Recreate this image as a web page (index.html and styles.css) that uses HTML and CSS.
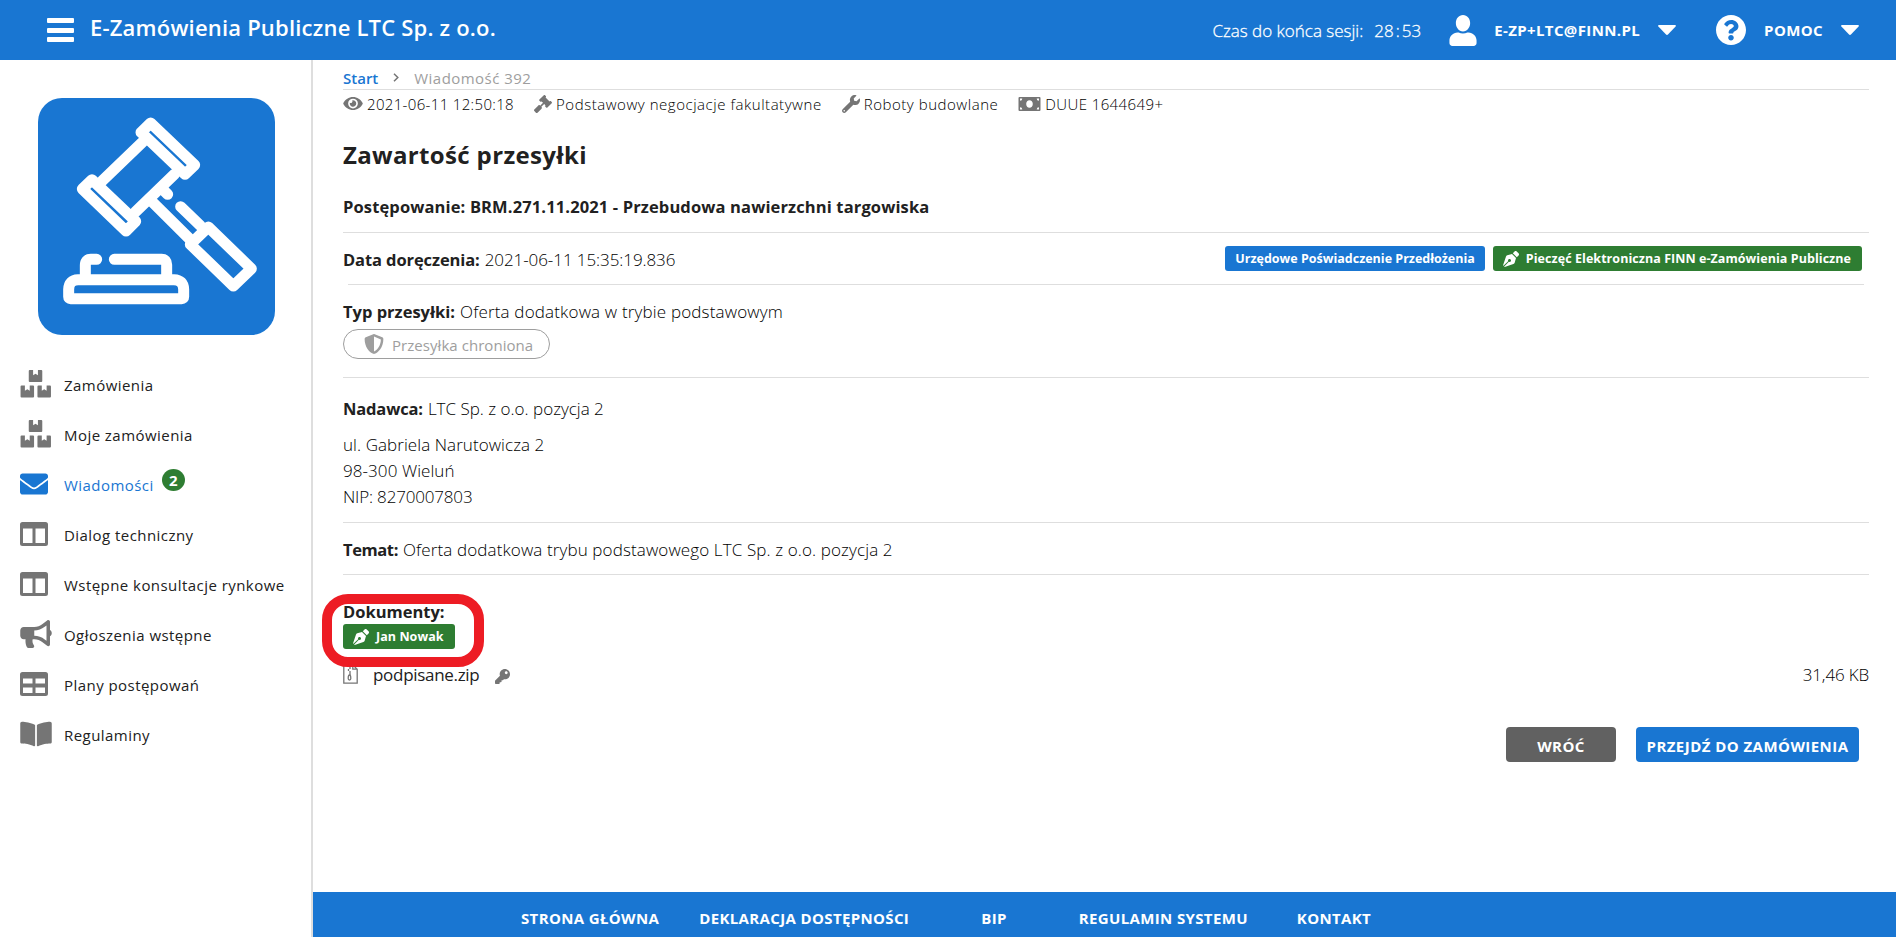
FILE: index.html
```
<!DOCTYPE html>
<html lang="pl">
<head>
    <meta charset="UTF-8">
    <meta name="viewport" content="width=device-width, initial-scale=1.0">
    <title>E-Zamówienia Publiczne LTC Sp. z o.o.</title>
    <link rel="stylesheet" href="styles.css">
</head>
<body>
    <header class="topbar">
        <button class="hamburger" aria-label="Menu"><span></span><span></span><span></span></button>
        <h1 class="app-title">E-Zamówienia Publiczne LTC Sp. z o.o.</h1>
        <div class="session"><span class="session-label">Czas do końca sesji:</span> <span class="session-time">28<i>:</i>53</span></div>
        <a class="account" href="#">
            <svg class="icon-user" viewBox="0 0 448 512"><path d="M224 272c70.700 0 118-64 118-138S294.700 0 224 0 106 60 106 134s47.300 138 118 138zm89.600 16h-16.700c-22.200 10.200-46.900 16-72.900 16s-50.600-5.800-72.900-16h-16.700C60.200 288 0 348.200 0 422.400V464c0 26.500 21.500 48 48 48h352c26.500 0 48-21.500 48-48v-41.600c0-74.200-60.200-134.400-134.400-134.400z"/></svg>
            <span class="account-name">E-ZP+LTC@FINN.PL</span>
            <svg class="caret" viewBox="0 0 18 10"><path d="M1.200 0h15.600q1.800 0 .8 1.400L10.200 9.300q-1.200 1.200-2.400 0L.4 1.400Q-.6 0 1.200 0z"/></svg>
        </a>
        <a class="help" href="#">
            <svg class="icon-help" viewBox="8 8 496 496"><path d="M504 256c0 136.997-111.043 248-248 248S8 392.997 8 256C8 119.083 119.043 8 256 8s248 111.083 248 248zM262.655 90c-54.497 0-89.255 22.957-116.549 63.758-3.536 5.286-2.353 12.415 2.715 16.258l34.699 26.310c5.205 3.947 12.621 3.008 16.665-2.122 17.864-22.658 30.113-35.797 57.303-35.797 20.429 0 45.698 13.148 45.698 32.958 0 14.976-12.363 22.667-32.534 33.976C247.128 238.528 216 254.941 216 296v4c0 6.627 5.373 12 12 12h56c6.627 0 12-5.373 12-12v-1.333c0-28.462 83.186-29.647 83.186-106.667 0-58.002-60.165-102-116.531-102zM256 338c-25.365 0-46 20.635-46 46 0 25.364 20.635 46 46 46s46-20.636 46-46c0-25.365-20.635-46-46-46z"/></svg>
            <span class="help-name">POMOC</span>
            <svg class="caret" viewBox="0 0 18 10"><path d="M1.200 0h15.600q1.800 0 .8 1.400L10.200 9.300q-1.200 1.200-2.400 0L.4 1.400Q-.6 0 1.200 0z"/></svg>
        </a>
    </header>

    <div class="layout">
        <aside class="sidebar">
            <div class="logo">
                <svg viewBox="54 54 711 711">
                    <path d="M392 129 524 255 495 283 363 157z"/>
                    <path d="M216 299 347 424 318 453 187 327z"/>
                    <path d="M247 302 367 187M346 396 464 282"/>
                    <path d="M399 368 506 474M425 325 443 343M482 380 541 437"/>
                    <path d="M565 441 694 566 640 618 511 493z"/>
                    <path d="M196 590V556Q196 538 212 538H230M283 538H425Q440 538 440 554V590"/>
                    <path d="M146 650V628Q147 600 174 599H462Q490 600 491 628V650Q491 656 485 656H152Q146 656 146 650z"/>
                </svg>
            </div>
            <nav class="menu">
                <a href="#" class="menu-item"><svg class="wide" viewBox="0 0 32 29"><path d="M9.500 0H13v5.500l2.500-1.500 2.500 1.500V0h3.500q1 0 1 1v10.500q0 1-1 1h-12q-1 0-1-1V1q0-1 1-1zM1 16h3.500v5.500L7 20l2.500 1.500V16H13q1 0 1 1v10.500q0 1-1 1H1q-1 0-1-1V17q0-1 1-1zM18.500 16H22v5.500l2.500-1.500 2.500 1.500V16h3.500q1 0 1 1v10.500q0 1-1 1h-12q-1 0-1-1V17q0-1 1-1z"/></svg><span>Zamówienia</span></a>
                <a href="#" class="menu-item"><svg class="wide" viewBox="0 0 32 29"><path d="M9.500 0H13v5.500l2.500-1.500 2.500 1.500V0h3.500q1 0 1 1v10.500q0 1-1 1h-12q-1 0-1-1V1q0-1 1-1zM1 16h3.500v5.500L7 20l2.500 1.500V16H13q1 0 1 1v10.500q0 1-1 1H1q-1 0-1-1V17q0-1 1-1zM18.500 16H22v5.500l2.500-1.500 2.500 1.500V16h3.500q1 0 1 1v10.500q0 1-1 1h-12q-1 0-1-1V17q0-1 1-1z"/></svg><span>Moje zamówienia</span></a>
                <a href="#" class="menu-item active"><svg viewBox="0 0 512 512"><path d="M502.300 190.800c3.900-3.100 9.700-.2 9.700 4.700V400c0 26.500-21.500 48-48 48H48c-26.500 0-48-21.500-48-48V195.600c0-5 5.700-7.800 9.700-4.700 22.400 17.400 52.100 39.500 154.100 113.600 21.100 15.400 56.700 47.800 92.200 47.600 35.700.3 72-32.800 92.300-47.600 102-74.100 131.600-96.300 154-113.700zM256 320c23.200.4 56.600-29.200 73.400-41.400 132.700-96.300 142.800-104.700 173.400-128.700 5.800-4.500 9.200-11.500 9.200-18.900v-19c0-26.500-21.500-48-48-48H48c-26.500 0-48 21.500-48 48v19c0 7.400 3.400 14.300 9.200 18.900 30.600 23.900 40.700 32.400 173.400 128.700 16.800 12.200 50.200 41.800 73.400 41.400z"/></svg><span>Wiadomości</span><b class="counter">2</b></a>
                <a href="#" class="menu-item"><svg viewBox="0 0 28 28"><path fill-rule="evenodd" d="M2.500 2h23Q28 2 28 4.500v19q0 2.500-2.500 2.500h-23Q0 26 0 23.500v-19Q0 2 2.500 2zM3 8.500V23h9.500V8.500zm12.500 0V23H25V8.500z"/></svg><span>Dialog techniczny</span></a>
                <a href="#" class="menu-item"><svg viewBox="0 0 28 28"><path fill-rule="evenodd" d="M2.500 2h23Q28 2 28 4.500v19q0 2.500-2.500 2.500h-23Q0 26 0 23.500v-19Q0 2 2.500 2zM3 8.500V23h9.500V8.500zm12.500 0V23H25V8.500z"/></svg><span>Wstępne konsultacje rynkowe</span></a>
                <a href="#" class="menu-item"><svg class="wide" viewBox="0 0 576 512"><path d="M576 240c0-23.630-12.950-44.040-32-55.120V32.010C544 23.260 537.020 0 512 0c-7.120 0-14.190 2.380-19.980 7.020l-85.030 68.030C364.280 109.190 310.660 128 256 128H64c-35.350 0-64 28.650-64 64v96c0 35.350 28.650 64 64 64h33.700c-1.390 10.480-2.180 21.140-2.180 32 0 39.770 9.260 77.350 25.560 110.940 5.190 10.690 16.520 17.060 28.400 17.060h74.280c26.050 0 41.690-29.840 25.900-50.560-16.400-21.520-26.150-48.360-26.150-77.440 0-11.110 1.620-21.790 4.410-32H256c54.660 0 108.280 18.810 150.980 52.950l85.030 68.030a32.023 32.023 0 0 0 19.980 7.020c24.920 0 32-22.780 32-32V295.130C563.050 284.040 576 263.630 576 240zm-96 141.420l-33.050-26.440C392.950 311.780 325.120 288 256 288v-96c69.120 0 136.950-23.780 190.950-66.980L480 98.580v282.840z"/></svg><span>Ogłoszenia wstępne</span></a>
                <a href="#" class="menu-item"><svg viewBox="0 0 28 28"><path fill-rule="evenodd" d="M2.500 2h23Q28 2 28 4.500v19q0 2.500-2.500 2.500h-23Q0 26 0 23.500v-19Q0 2 2.500 2zM3 8.500v5h9.500v-5zm12.500 0v5H25v-5zM3 17.500V23h9.500v-5.500zm12.500 0V23H25v-5.500z"/></svg><span>Plany postępowań</span></a>
                <a href="#" class="menu-item"><svg class="wide" viewBox="0 0 576 512"><path d="M542.220 32.050c-54.800 3.110-163.720 14.430-230.960 55.590-4.640 2.840-7.270 7.890-7.270 13.170v363.870c0 11.550 12.630 18.850 23.280 13.490 69.180-34.820 169.230-44.320 218.700-46.920 16.890-.89 30.020-14.430 30.020-30.660V62.750c.01-17.710-15.350-31.740-33.770-30.700zM264.730 87.640C197.500 46.480 88.580 35.170 33.780 32.050 15.360 31.010 0 45.040 0 62.750V400.600c0 16.240 13.130 29.780 30.020 30.660 49.490 2.600 149.590 12.110 218.770 46.950 10.620 5.350 23.210-1.940 23.210-13.460V100.630c0-5.290-2.620-10.140-7.270-12.990z"/></svg><span>Regulaminy</span></a>
            </nav>
        </aside>

        <main class="content">
            <div class="page">
                <div class="breadcrumb">
                    <a href="#">Start</a>
                    <svg viewBox="0 0 6 9"><path d="M1 .8 4.800 4.500 1 8.200"/></svg>
                    <span class="crumb">Wiadomość 392</span>
                </div>
                <div class="meta">
                    <span class="meta-item"><svg class="eye" viewBox="0 64 576 384"><path d="M572.520 241.400C518.290 135.590 410.930 64 288 64S57.680 135.640 3.480 241.410a32.350 32.350 0 0 0 0 29.190C57.710 376.410 165.070 448 288 448s230.320-71.640 284.520-177.410a32.350 32.350 0 0 0 0-29.190zM288 400a144 144 0 1 1 144-144 143.930 143.930 0 0 1-144 144zm0-240a95.310 95.310 0 0 0-25.310 3.790 47.850 47.850 0 0 1-66.900 66.900A95.780 95.780 0 1 0 288 160z"/></svg><span class="viewed">2021-06-11 12:50:18</span></span>
                    <span class="meta-item"><svg class="gavel" viewBox="0 0 512 512"><path d="M504.971 199.362l-22.627-22.627c-9.373-9.373-24.569-9.373-33.941 0l-5.657 5.657L329.608 69.255l5.657-5.657c9.373-9.373 9.373-24.569 0-33.941L312.638 7.029c-9.373-9.373-24.569-9.373-33.941 0L154.246 131.480c-9.373 9.373-9.373 24.569 0 33.941l22.627 22.627c9.373 9.373 24.569 9.373 33.941 0l5.657-5.657 39.598 39.598-81.040 81.040-5.657-5.657c-12.497-12.497-32.758-12.497-45.255 0L9.373 412.118c-12.497 12.497-12.497 32.758 0 45.255l45.255 45.255c12.497 12.497 32.758 12.497 45.255 0l114.745-114.745c12.497-12.497 12.497-32.758 0-45.255l-5.657-5.657 81.040-81.040 39.598 39.598-5.657 5.657c-9.373 9.373-9.373 24.569 0 33.941l22.627 22.627c9.373 9.373 24.569 9.373 33.941 0l124.451-124.451c9.372-9.372 9.372-24.568 0-33.941z"/></svg><span>Podstawowy negocjacje fakultatywne</span></span>
                    <span class="meta-item"><svg class="wrench" viewBox="0 0 512 512"><path d="M507.730 109.100c-2.240-9.030-13.540-12.090-20.120-5.510l-74.360 74.360-67.880-11.310-11.310-67.880 74.360-74.360c6.620-6.620 3.430-17.900-5.660-20.160-47.380-11.740-99.550.91-136.580 37.930-39.640 39.640-50.550 97.100-34.050 147.200L18.740 402.760c-24.990 24.990-24.990 65.510 0 90.500 24.990 24.990 65.510 24.990 90.500 0l213.210-213.210c50.120 16.710 107.470 5.680 147.370-34.220 37.070-37.070 49.700-89.320 37.910-136.730zM64 472c-13.250 0-24-10.750-24-24 0-13.260 10.750-24 24-24s24 10.740 24 24c0 13.250-10.750 24-24 24z"/></svg><span>Roboty budowlane</span></span>
                    <span class="meta-item"><svg class="money" viewBox="0 0 22 14"><path fill-rule="evenodd" d="M1 0h20q1 0 1 1v12q0 1-1 1H1q-1 0-1-1V1q0-1 1-1zM1.500 1.500v2.300Q3.800 3.800 3.800 1.500zm16.700 0q0 2.300 2.300 2.300V1.500zM1.500 10.200v2.300h2.300q0-2.300-2.300-2.300zm19 0q-2.300 0-2.300 2.300h2.300zM11 3.300c-1.900 0-3.300 1.600-3.300 3.700s1.400 3.700 3.300 3.700 3.300-1.600 3.300-3.700S12.900 3.300 11 3.300z"/></svg><span class="journal">DUUE 1644649+</span></span>
                </div>

                <h2>Zawartość przesyłki</h2>
                <div class="row row-case"><strong>Postępowanie: BRM.271.11.2021 - Przebudowa nawierzchni targowiska</strong></div>
                <div class="row row-date">
                    <strong>Data doręczenia:</strong><span class="date">2021-06-11 15:35:19.836</span>
                    <div class="tags">
                        <span class="tag tag-blue">Urzędowe Poświadczenie Przedłożenia</span>
                        <span class="tag tag-green"><svg viewBox="0 0 512 512"><path d="M136.600 138.790a64.003 64.003 0 0 0-43.310 41.350L0 460l14.690 14.690L164.800 324.580c-2.990-6.260-4.800-13.180-4.800-20.580 0-26.510 21.490-48 48-48s48 21.490 48 48-21.490 48-48 48c-7.400 0-14.320-1.810-20.580-4.800L37.310 497.310 52 512l279.860-93.290a64.003 64.003 0 0 0 41.350-43.310L416 224 288 96l-151.400 42.790zm361.340-64.620l-60.110-60.110c-18.750-18.750-49.160-18.750-67.910 0l-56.550 56.550 128.020 128.020 56.550-56.550c18.750-18.750 18.750-49.150 0-67.910z"/></svg>Pieczęć Elektroniczna FINN e-Zamówienia Publiczne</span>
                    </div>
                </div>
                <div class="row row-type">
                    <div class="line"><strong>Typ przesyłki:</strong><span>Oferta dodatkowa w trybie podstawowym</span></div>
                    <span class="protected"><svg viewBox="0 0 512 512"><path d="M466.500 83.700l-192-80a48.150 48.150 0 0 0-36.900 0l-192 80C27.700 91.100 16 108.600 16 128c0 198.500 114.500 335.700 221.500 380.300 11.800 4.900 25.100 4.900 36.900 0C360.100 472.600 496 349.300 496 128c0-19.400-11.700-36.900-29.500-44.300zM256.100 446.300l-.1-381 175.900 73.300c-3.300 151.400-82.100 261.100-175.800 307.700z"/></svg>Przesyłka chroniona</span>
                </div>
                <div class="row row-sender">
                    <div class="line"><strong>Nadawca:</strong><span>LTC Sp. z o.o. pozycja 2</span></div>
                    <address>
                        <span>ul. Gabriela Narutowicza 2</span><br>
                        <span>98-300 Wieluń</span><br>
                        <span class="nip">NIP: 8270007803</span>
                    </address>
                </div>
                <div class="row row-subject"><strong>Temat:</strong><span>Oferta dodatkowa trybu podstawowego LTC Sp. z o.o. pozycja 2</span></div>

                <section class="documents">
                    <div class="signature">
                        <strong>Dokumenty:</strong>
                        <span class="tag tag-green"><svg viewBox="0 0 512 512"><path d="M136.600 138.790a64.003 64.003 0 0 0-43.310 41.350L0 460l14.690 14.690L164.800 324.580c-2.990-6.260-4.800-13.180-4.800-20.580 0-26.510 21.490-48 48-48s48 21.490 48 48-21.490 48-48 48c-7.400 0-14.320-1.810-20.580-4.800L37.310 497.310 52 512l279.860-93.290a64.003 64.003 0 0 0 41.350-43.310L416 224 288 96l-151.400 42.790zm361.340-64.620l-60.110-60.110c-18.750-18.750-49.160-18.750-67.910 0l-56.550 56.550 128.020 128.020 56.550-56.550c18.750-18.750 18.750-49.150 0-67.910z"/></svg>Jan Nowak</span>
                    </div>
                    <div class="file">
                        <svg class="file-icon" viewBox="0 0 15 20"><path d="M.8.8h9l4.400 4.400v14H.8zM9.800.8v4.400h4.400M5.500 1v2M7 3v2M5.500 5v2M7 7v4"/><path d="M5.200 14.500q0-3.500 1.300-3.500t1.300 3.500q0 1.500-1.300 1.500t-1.300-1.500z"/></svg>
                        <span class="file-name">podpisane.zip</span>
                        <svg class="key" viewBox="0 0 512 512"><path d="M512 176.001C512 273.203 433.202 352 336 352c-11.220 0-22.190-1.062-32.827-3.069l-24.012 27.014A23.999 23.999 0 0 1 261.223 384H224v40c0 13.255-10.745 24-24 24h-40v40c0 13.255-10.745 24-24 24H24c-13.255 0-24-10.745-24-24v-78.059c0-6.365 2.529-12.470 7.029-16.971l161.802-161.802C163.108 213.814 160 195.271 160 176 160 78.798 238.797.001 335.999 0 433.488-.001 512 78.511 512 176.001zM336 128c0 26.510 21.490 48 48 48s48-21.490 48-48-21.490-48-48-48-48 21.490-48 48z"/></svg>
                        <span class="file-size">31,46 KB</span>
                    </div>
                </section>

                <div class="actions">
                    <button class="btn btn-back">WRÓĆ</button>
                    <button class="btn btn-go">PRZEJDŹ DO ZAMÓWIENIA</button>
                </div>
            </div>

            <footer class="footer">
                <a href="#" class="footer-home">STRONA GŁÓWNA</a>
                <a href="#" class="footer-access">DEKLARACJA DOSTĘPNOŚCI</a>
                <a href="#" class="footer-bip">BIP</a>
                <a href="#" class="footer-rules">REGULAMIN SYSTEMU</a>
                <a href="#" class="footer-contact">KONTAKT</a>
            </footer>
        </main>
    </div>
</body>
</html>
```
FILE: styles.css
```
* {
    box-sizing: border-box;
}
body {
    margin: 0;
    height: 937px;
    overflow: hidden;
    display: flex;
    flex-direction: column;
    font-family: "Segoe UI", "Open Sans", "Noto Sans", sans-serif;
    font-size: 17px;
    font-weight: 300;
    color: #000;
    background-color: #fff;
}
a {
    color: inherit;
    text-decoration: none;
}
svg {
    display: block;
    flex: none;
    fill: currentColor;
}
span, strong, a {
    white-space: nowrap;
}
strong, h2 {
    font-weight: 700;
    color: #212121;
}
strong {
    font-size: 16.5px;
}

/* górny pasek */
.topbar {
    height: 60px;
    flex: none;
    display: flex;
    align-items: center;
    padding: 0 37px 0 47px;
    background-color: #1976d2;
    color: #fff;
}
.hamburger {
    width: 27px;
    height: 24px;
    padding: 0;
    border: none;
    background: none;
    display: flex;
    flex-direction: column;
    justify-content: space-between;
}
.hamburger span {
    height: 5px;
    border-radius: 1px;
    background-color: #fff;
}
.app-title {
    margin: 0 auto 7px 16px;
    font-size: 22px;
    font-weight: 600;
    letter-spacing: 0.2px;
}
.session {
    display: flex;
    gap: 11px;
    margin-right: 28px;
    -webkit-text-stroke: 0.3px #fff;
}
.session-time i {
    font-style: normal;
    margin: 0 2px;
}
.account, .help {
    display: flex;
    align-items: center;
    font-size: 15px;
    font-weight: 700;
    letter-spacing: 0.38px;
}
.account {
    margin-right: 40px;
}
.icon-user {
    width: 28px;
    height: 31px;
    margin-right: 17px;
}
.icon-help {
    width: 30px;
    height: 30px;
    margin-right: 18px;
}
.caret {
    width: 18px;
    height: 10px;
    margin-left: 18px;
}

/* układ strony */
.layout {
    flex: 1;
    display: flex;
    min-height: 0;
}
.sidebar {
    width: 313px;
    flex: none;
    border-right: 2px solid #dedede;
    padding-top: 38px;
}
.logo {
    width: 237px;
    height: 237px;
    margin-left: 38px;
    border-radius: 24px;
    background-color: #1976d2;
}
.logo svg {
    fill: none;
    stroke: #fff;
    stroke-width: 33;
    stroke-linecap: round;
    stroke-linejoin: round;
}
.menu {
    margin-top: 25px;
    padding-left: 20px;
}
.menu-item {
    height: 50px;
    display: flex;
    align-items: center;
    font-size: 15px;
    font-weight: 400;
    letter-spacing: 0.45px;
    color: #212121;
}
.menu-item svg {
    width: 28px;
    height: 28px;
    margin-right: 16px;
    margin-bottom: 3px;
    color: #757575;
}
.menu-item svg.wide {
    width: 32px;
    height: 28px;
    margin-right: 12px;
}
.menu-item.active, .menu-item.active svg {
    color: #1976d2;
}
.counter {
    width: 23px;
    height: 22px;
    margin: 0 0 10px 8px;
    border-radius: 50%;
    background-color: #2e7d32;
    color: #fff;
    font-size: 15px;
    line-height: 22px;
    letter-spacing: 0;
    text-align: center;
}
.content {
    flex: 1;
    display: flex;
    flex-direction: column;
}
.page {
    flex: 1;
    padding: 0 27px 0 30px;
}

/* okruszki i metadane */
.breadcrumb {
    height: 30px;
    display: flex;
    align-items: center;
    padding-top: 6px;
    border-bottom: 1px solid #dedede;
    font-size: 15px;
}
.breadcrumb a {
    font-weight: 600;
    color: #1976d2;
}
.breadcrumb svg {
    width: 6px;
    height: 9px;
    margin: 0 15px 1px;
    fill: none;
    stroke: #757575;
    stroke-width: 1.5;
}
.crumb {
    font-weight: 400;
    letter-spacing: 0.46px;
    color: #9e9e9e;
}
.meta {
    height: 28px;
    display: flex;
    align-items: center;
    gap: 20px;
    padding-bottom: 1px;
    font-size: 15px;
    letter-spacing: 0.54px;
}
.meta-item {
    display: flex;
    align-items: center;
}
.meta-item svg {
    margin-right: 4px;
    color: #757575;
}
.meta-item .eye {
    width: 20px;
    height: 13px;
}
.viewed {
    letter-spacing: 0.34px;
}
.journal {
    letter-spacing: 0.4px;
}
.gavel, .wrench {
    width: 18px;
    height: 18px;
}
.meta-item .money {
    width: 23px;
    height: 14px;
}
h2 {
    margin: 0;
    padding-top: 19px;
    height: 69px;
    font-size: 24px;
    line-height: 36px;
    letter-spacing: 0.35px;
}

/* wiersze przesyłki */
.row {
    line-height: 26px;
    border-bottom: 1px solid #dedede;
}
.row-case {
    height: 46px;
    padding-top: 7px;
}
.row-case strong {
    letter-spacing: 0.13px;
}
.row-date {
    height: 52px;
    display: flex;
    align-items: center;
    margin: 0 5px;
}
.row-date strong {
    margin: 2px 0 0 -5px;
    letter-spacing: -0.1px;
}
.date, .line span, .row-subject span {
    margin-left: 5px;
}
.date {
    margin-top: 2px;
    letter-spacing: -0.08px;
}
.tags {
    display: flex;
    gap: 8px;
    margin-left: auto;
    margin-right: 2px;
}
.tag {
    display: flex;
    align-items: center;
    width: fit-content;
    height: 25px;
    padding: 0 11px 0 10px;
    border-radius: 3px;
    color: #fff;
    font-size: 12.5px;
    font-weight: 700;
    letter-spacing: 0.06px;
}
.tag svg {
    width: 16px;
    height: 16px;
    margin-right: 7px;
}
.tag-blue {
    padding: 0 10px;
    letter-spacing: 0;
    background-color: #1976d2;
}
.tag-green {
    background-color: #2e7d32;
}
.row-type {
    height: 93px;
    padding-top: 14px;
}
.row-type .line span {
    letter-spacing: 0.17px;
}
.protected {
    width: 207px;
    height: 30px;
    margin-top: 4px;
    padding: 2px 0 0 20px;
    display: flex;
    align-items: center;
    border: 1px solid #9e9e9e;
    border-radius: 15px;
    font-size: 15px;
    font-weight: 400;
    letter-spacing: 0.05px;
    color: #9e9e9e;
}
.protected svg {
    width: 20px;
    height: 20px;
    margin: 0 8px 3px 0;
}
.row-sender {
    height: 145px;
    padding-top: 18px;
}
.row-sender strong {
    letter-spacing: -0.15px;
}
address {
    margin-top: 10px;
    font-style: normal;
    letter-spacing: 0.07px;
}
.nip {
    letter-spacing: -0.17px;
}
.row-subject {
    height: 52px;
    padding-top: 14px;
}
.row-subject strong {
    letter-spacing: -0.4px;
}
.row-subject span {
    letter-spacing: 0.12px;
}

/* dokumenty */
.documents {
    height: 152px;
    padding-top: 19px;
}
.signature {
    position: relative;
    width: 162px;
    height: 73px;
    margin-left: -21px;
    padding-left: 11px;
    border: 10px solid #ed1c24;
    border-radius: 26px;
    line-height: 18px;
}
.signature strong {
    display: block;
    margin-top: -1px;
}
.signature .tag {
    margin-top: 3px;
}
.file {
    display: flex;
    align-items: center;
    height: 30px;
    margin-top: -8px;
}
.file-icon {
    width: 15px;
    height: 20px;
    fill: none;
    stroke: #757575;
    stroke-width: 1.3;
}
.file-name {
    margin-left: 15px;
    font-weight: 400;
    letter-spacing: -0.3px;
    color: #212121;
}
.key {
    width: 15px;
    height: 15px;
    margin: 4px 0 0 16px;
    color: #757575;
}
.file-size {
    margin-left: auto;
    letter-spacing: -0.15px;
}
.actions {
    display: flex;
    justify-content: flex-end;
    gap: 20px;
    padding-right: 10px;
}
.btn {
    height: 35px;
    padding: 2px 0 0;
    border: none;
    border-radius: 4px;
    color: #fff;
    font-family: inherit;
    font-size: 15px;
    font-weight: 700;
    letter-spacing: 0.45px;
}
.btn-back {
    width: 110px;
    background-color: #616161;
}
.btn-go {
    width: 223px;
    background-color: #1976d2;
}

/* stopka */
.footer {
    height: 45px;
    display: flex;
    align-items: center;
    padding: 7px 0 0 208px;
    background-color: #1976d2;
    color: #fff;
    font-size: 15px;
    font-weight: 700;
    letter-spacing: 0.36px;
}
.footer-access {
    margin-left: 40px;
}
.footer-bip, .footer-rules {
    margin-left: 72px;
}
.footer-contact {
    margin-left: 49px;
}
```
